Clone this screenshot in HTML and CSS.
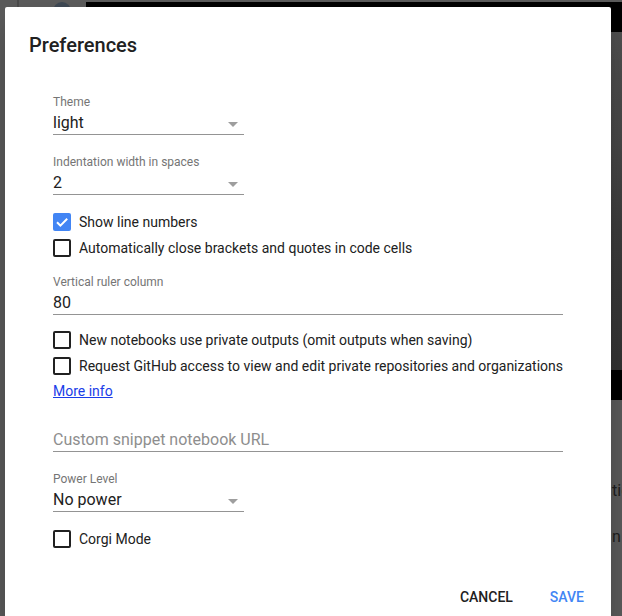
FILE: index.html
```html
<!DOCTYPE html>
<html lang="en">
<head>
    <meta charset="UTF-8">
    <meta name="viewport" content="width=device-width, initial-scale=1.0">
    <title>Preferences</title>
    <link rel="stylesheet" href="styles.css">
</head>
<body>
    <!-- page behind the modal scrim -->
    <div class="backdrop">
        <div class="bg-rail"></div>
        <div class="bg-avatar"></div>
        <div class="bg-header"></div>
        <div class="bg-image"></div>
        <div class="bg-strip"></div>
        <span class="bg-text bg-text-1">tic</span>
        <span class="bg-text bg-text-2">n</span>
    </div>

    <div class="dialog">
        <h2 class="dialog-title">Preferences</h2>

        <div class="dialog-body">
            <div class="field">
                <div class="field-label">Theme</div>
                <div class="select">
                    <span>light</span>
                    <span class="arrow"></span>
                </div>
            </div>

            <div class="field field-next">
                <div class="field-label">Indentation width in spaces</div>
                <div class="select">
                    <span>2</span>
                    <span class="arrow"></span>
                </div>
            </div>

            <div class="checks">
                <label class="check">
                    <span class="box checked">
                        <svg width="18" height="18" viewBox="0 0 18 18"><path d="M4 9.2l3.4 3.4L14.2 5.8" fill="none" stroke="#fff" stroke-width="2"/></svg>
                    </span>
                    Show line numbers
                </label>
                <label class="check">
                    <span class="box"></span>
                    Automatically close brackets and quotes in code cells
                </label>
            </div>

            <div class="field field-ruler">
                <div class="field-label">Vertical ruler column</div>
                <div class="text-input">80</div>
            </div>

            <div class="checks checks-tight">
                <label class="check">
                    <span class="box"></span>
                    New notebooks use private outputs (omit outputs when saving)
                </label>
                <label class="check">
                    <span class="box"></span>
                    Request GitHub access to view and edit private repositories and organizations
                </label>
            </div>

            <a class="more-info" href="#">More info</a>

            <div class="text-input placeholder snippet">Custom snippet notebook URL</div>

            <div class="field field-next">
                <div class="field-label">Power Level</div>
                <div class="select">
                    <span>No power</span>
                    <span class="arrow"></span>
                </div>
            </div>

            <div class="checks">
                <label class="check">
                    <span class="box"></span>
                    Corgi Mode
                </label>
            </div>
        </div>

        <div class="dialog-actions">
            <button class="btn">Cancel</button>
            <button class="btn btn-primary">Save</button>
        </div>
    </div>
</body>
</html>
```

FILE: styles.css
```css
body {
    margin: 0;
    width: 622px;
    height: 616px;
    overflow: hidden;
    background-color: #5b5b5b;
    font-family: Roboto, "Liberation Sans", sans-serif;
    color: #212121;
}

/* underlying page, dimmed */
.backdrop {
    position: absolute;
    inset: 0;
    overflow: hidden;
}
.bg-rail {
    position: absolute;
    left: 17px;
    top: 0;
    width: 2px;
    height: 8px;
    background: #4a4a4a;
}
.bg-avatar {
    position: absolute;
    left: 53px;
    top: 2px;
    width: 18px;
    height: 18px;
    border-radius: 50%;
    background: #3e4853;
}
.bg-header {
    position: absolute;
    left: 86px;
    right: 0;
    top: 2px;
    height: 30px;
    background: #000;
}
.bg-image {
    position: absolute;
    left: 560px;
    right: 0;
    top: 32px;
    height: 338px;
    background: linear-gradient(170deg, #505050 0%, #474747 35%, #3c3c3c 60%, #333 100%);
}
.bg-strip {
    position: absolute;
    left: 560px;
    right: 0;
    top: 370px;
    height: 30px;
    background: #000;
}
.bg-text {
    position: absolute;
    left: 612px;
    font-size: 16px;
    color: #1e1e1e;
}
.bg-text-1 { top: 481px; }
.bg-text-2 { top: 527px; }

/* modal */
.dialog {
    position: absolute;
    left: 5px;
    top: 7px;
    width: 606px;
    height: 609px;
    background: #fff;
    border-radius: 2px 2px 0 0;
    box-shadow: 0 11px 15px -7px rgba(0, 0, 0, 0.2), 0 24px 38px 3px rgba(0, 0, 0, 0.14);
    box-sizing: border-box;
    padding-top: 26px;
    display: flex;
    flex-direction: column;
}
.dialog-title {
    margin: 0;
    padding-left: 24px;
    font-size: 20px;
    line-height: 24px;
    font-weight: 500;
    color: #212121;
}
.dialog-body {
    margin-top: 37px;
    padding-left: 48px;
    display: flex;
    flex-direction: column;
    align-items: flex-start;
}

.field-label {
    font-size: 12px;
    line-height: 16px;
    color: #757575;
    margin-bottom: 2px;
}
.field-next { margin-top: 19px; }
.field-ruler { margin-top: 13px; }

.select {
    width: 191px;
    display: flex;
    justify-content: space-between;
    align-items: center;
    font-size: 16px;
    line-height: 22px;
    border-bottom: 1px solid #949494;
}
.arrow {
    width: 0;
    height: 0;
    margin-right: 6px;
    margin-top: 2px;
    border-left: 5px solid transparent;
    border-right: 5px solid transparent;
    border-top: 5px solid #9e9e9e;
}

.text-input {
    width: 510px;
    font-size: 16px;
    line-height: 22px;
    border-bottom: 1px solid #949494;
}
.placeholder { color: #8e8e8e; }
.snippet { margin-top: 28px; }

.checks {
    margin-top: 14px;
    display: flex;
    flex-direction: column;
}
.checks-tight { margin-top: 12px; }
.check {
    height: 26px;
    display: flex;
    align-items: center;
    gap: 8px;
    font-size: 14px;
    color: #212121;
}
.box {
    width: 18px;
    height: 18px;
    box-sizing: border-box;
    border: 2px solid #212121;
    border-radius: 2px;
    display: flex;
}
.box.checked {
    border: none;
    background: #4285f4;
}

.more-info {
    margin-top: 2px;
    font-size: 14px;
    line-height: 20px;
    color: #1a3de8;
}

.dialog-actions {
    margin-top: 27px;
    padding-right: 19px;
    display: flex;
    justify-content: flex-end;
    gap: 21px;
}
.btn {
    height: 36px;
    padding: 0 8px;
    border: none;
    background: none;
    font-family: inherit;
    font-size: 14px;
    font-weight: 500;
    text-transform: uppercase;
    color: #212121;
    cursor: pointer;
}
.btn-primary { color: #4285f4; }
```
